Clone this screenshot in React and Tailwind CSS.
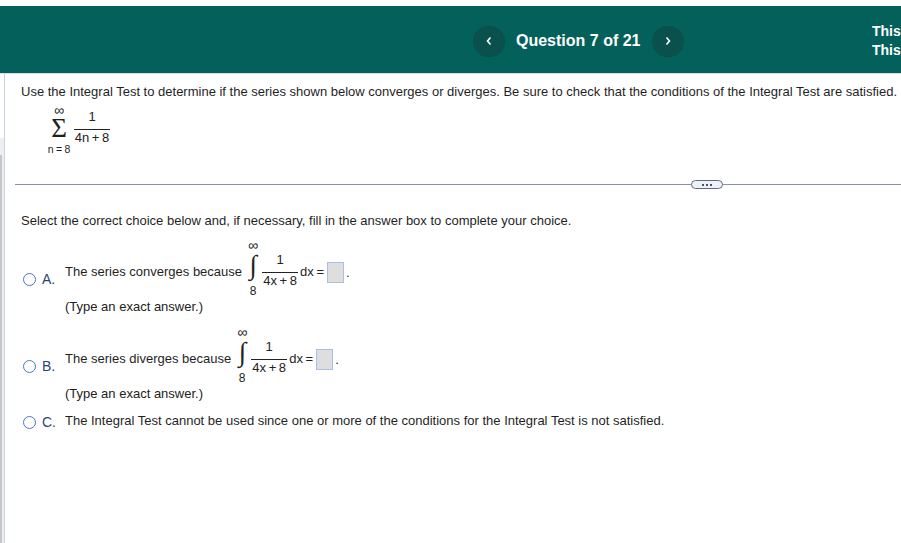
const font = { fontFamily: '"Liberation Sans", Arial, sans-serif' };

function Fraction({ num, den }) {
  return (
    <span className="inline-flex w-[36px] flex-col items-center text-[13px] leading-[15px] text-[#222]">
      <span className="pb-[5px]">{num}</span>
      <span className="self-stretch border-t border-[#222] pt-[1px] text-center leading-[14px] whitespace-nowrap [word-spacing:-1px]">{den}</span>
    </span>
  );
}

function MathLine({ text }) {
  return (
    <div className="flex h-[60px] items-start">
      <span className="mt-[25px] leading-[17px] whitespace-nowrap">{text}</span>
      <span className="ml-[5px] flex w-[12px] flex-col items-center text-[14px] leading-[14px] text-[#222]">
        <span>∞</span>
        <span className="mb-[6px] font-['Liberation_Serif'] text-[27px] leading-[26px]">∫</span>
        <span className="text-[12px]">8</span>
      </span>
      <span className="mt-[14px] ml-[3px] flex items-center">
        <Fraction num="1" den="4x + 8" />
        <span className="mt-[2px] ml-[2px] text-[13px] whitespace-nowrap [word-spacing:-1px]">dx =</span>
        <span className="mt-[5px] ml-[3px] h-[21px] w-[17px] border border-[#a9c0e6] bg-[#dedede]" />
        <span className="mt-[5px] ml-[2px] text-[13px]">.</span>
      </span>
    </div>
  );
}

function Radio({ letter, className }) {
  return (
    <span className={`flex w-[42px] shrink-0 items-center ${className}`}>
      <span className="h-[13px] w-[13px] rounded-full border-[1.5px] border-[#4f76bd] bg-white" />
      <span className="ml-[6px] text-[14px] leading-[16px] text-[#2b4478]">{letter}</span>
    </span>
  );
}

function Choice({ letter, text, top }) {
  return (
    <div className={`ml-[18px] flex items-center ${top}`}>
      <Radio letter={letter} className="mt-[5px]" />
      <div>
        <MathLine text={text} />
        <p className="text-[#222]">(Type an exact answer.)</p>
      </div>
    </div>
  );
}

export default function App() {
  return (
    <div style={font} className="h-[543px] w-[901px] overflow-hidden bg-white pt-[6px] text-[#1f1f1f]">
      <header className="flex h-[68px] items-center border-b border-[#cfe0dd] bg-[#03605a] pt-[3px] text-white">
        <div className="ml-[473px] flex items-center">
          <span className="flex h-[31px] w-[32px] items-center justify-center rounded-full bg-[#0a504c]">
            <svg width="8" height="10" viewBox="0 0 8 10" fill="none" stroke="white" strokeWidth="1.6"><path d="M5.5 1.5 2.5 5l3 3.5" /></svg>
          </span>
          <span className="ml-[11px] w-[125px] text-[16px] leading-[20px] font-bold whitespace-nowrap">Question 7 of 21</span>
          <span className="ml-[11px] flex h-[31px] w-[32px] items-center justify-center rounded-full bg-[#0a504c]">
            <svg width="8" height="10" viewBox="0 0 8 10" fill="none" stroke="white" strokeWidth="1.6"><path d="M2.5 1.5 5.5 5l-3 3.5" /></svg>
          </span>
        </div>
        <div className="ml-[188px] flex w-[29px] flex-col overflow-hidden text-[14px] leading-[19px] font-bold">
          <span>This</span>
          <span>This</span>
        </div>
      </header>

      <div className="flex h-[469px]">
        <aside className="flex w-[5px] shrink-0 flex-col border-r border-[#c9d3e6]">
          <div className="h-[64px] bg-white" />
          <div className="h-[17px] bg-[#eeeeee]" />
          <div className="flex flex-1">
            <div className="w-[2px] bg-[#c6c6c6]" />
            <div className="flex-1 bg-[#eeeeee]" />
          </div>
        </aside>

        <main className="min-w-0 flex-1 text-[13px] leading-[17px]">
          <p className="ml-[16px] mt-[9px] whitespace-nowrap">
            Use the Integral Test to determine if the series shown below converges or diverges. Be sure to check that the conditions of the Integral Test are satisfied.
          </p>

          <div className="ml-[42px] mt-[4px] flex items-start">
            <span className="flex w-[24px] flex-col items-center">
              <span className="text-[14px] leading-[12px]">∞</span>
              <span className="font-['Liberation_Serif'] text-[27px] leading-[25px]">Σ</span>
              <span className="mt-[2px] text-[10.5px] leading-[12px] whitespace-nowrap [word-spacing:-0.5px]">n = 8</span>
            </span>
            <span className="mt-[4px] ml-[3px]">
              <Fraction num="1" den="4n + 8" />
            </span>
          </div>

          <div className="relative ml-[10px] mt-[29px] h-[1px] bg-[#8c93a6]">
            <span className="absolute left-[676px] top-[-4px] flex h-[9px] w-[32px] items-center justify-center gap-[2px] rounded-full border border-[#5e6b80] bg-[#eef2f6]">
              <span className="h-[2px] w-[2px] bg-[#44546a]" />
              <span className="h-[2px] w-[2px] bg-[#44546a]" />
              <span className="h-[2px] w-[2px] bg-[#44546a]" />
            </span>
          </div>

          <p className="ml-[16px] mt-[27px]">Select the correct choice below and, if necessary, fill in the answer box to complete your choice.</p>

          <Choice letter="A." text="The series converges because" top="mt-[9px]" />
          <Choice letter="B." text="The series diverges because" top="mt-[10px]" />

          <div className="ml-[18px] mt-[9px] flex items-center">
            <Radio letter="C." className="mt-[3px]" />
            <span>The Integral Test cannot be used since one or more of the conditions for the Integral Test is not satisfied.</span>
          </div>
        </main>
      </div>
    </div>
  );
}
